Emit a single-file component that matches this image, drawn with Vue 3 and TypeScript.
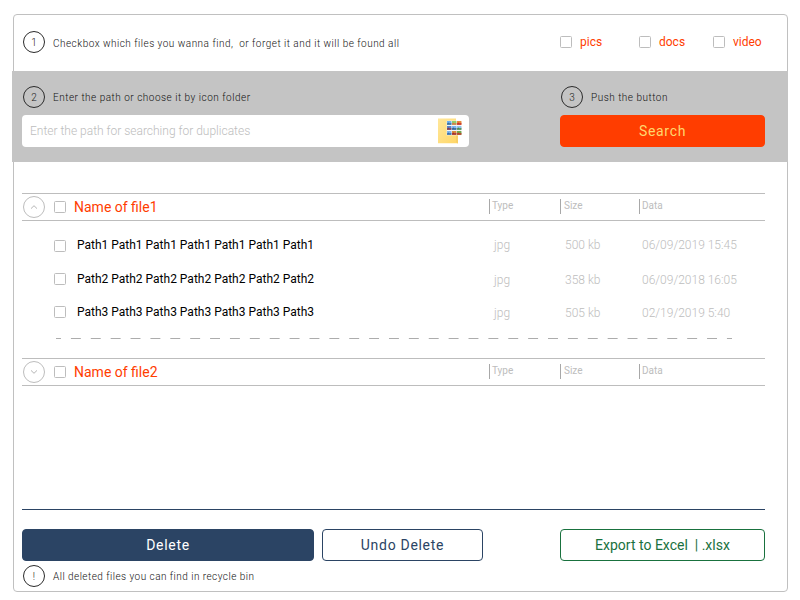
<script setup lang="ts">
import { ref } from 'vue'

interface Copy { path: string; type: string; size: string; date: string }
interface Group { name: string; open: boolean; copies: Copy[] }

const kinds = ref<string[]>(['pics', 'docs', 'video'])
const query = ref('')

const groups = ref<Group[]>([
  {
    name: 'Name of file1',
    open: true,
    copies: [
      { path: 'Path1 Path1 Path1 Path1 Path1 Path1 Path1', type: 'jpg', size: '500 kb', date: '06/09/2019 15:45' },
      { path: 'Path2 Path2 Path2 Path2 Path2 Path2 Path2', type: 'jpg', size: '358 kb', date: '06/09/2018 16:05' },
      { path: 'Path3 Path3 Path3 Path3 Path3 Path3 Path3', type: 'jpg', size: '505 kb', date: '02/19/2019 5:40' },
    ],
  },
  { name: 'Name of file2', open: false, copies: [] },
])

const thumbs = [
  { x: 9, y: 3, sky: '#6db0f2', land: '#3f6f9a' },
  { x: 14, y: 3, sky: '#8ccf70', land: '#d67a45' },
  { x: 19, y: 3, sky: '#e58a3c', land: '#c8302c' },
  { x: 9, y: 8, sky: '#5a83c8', land: '#8c3b4a' },
  { x: 14, y: 8, sky: '#7db4f0', land: '#31628f' },
  { x: 19, y: 8, sky: '#8fc0ec', land: '#4f8a45' },
  { x: 9, y: 13, sky: '#7fb5ee', land: '#3c6ea8' },
  { x: 14, y: 13, sky: '#d98a3a', land: '#a02c35' },
  { x: 19, y: 13, sky: '#70a84e', land: '#c23a2a' },
]
</script>

<template>
  <main class="frame">
    <section class="filters">
      <div class="hint"><span class="badge">1</span><span class="hint-text first">Checkbox which files you wanna find,&nbsp; or forget it and it will be found all</span></div>
      <label v-for="k in kinds" :key="k" class="kind"><input type="checkbox" class="box" />{{ k }}</label>
    </section>

    <section class="search">
      <div class="path-col">
        <div class="hint"><span class="badge">2</span><span class="hint-text">Enter the path or choose it by icon folder</span></div>
        <div class="field">
          <input v-model="query" class="query" type="text" placeholder="Enter the path for searching for duplicates" />
          <svg class="folder" width="26" height="26" viewBox="0 0 26 26">
            <defs>
              <linearGradient id="paper" x1="0" y1="0" x2="1" y2="1">
                <stop offset="0" stop-color="#ffe79b" />
                <stop offset="1" stop-color="#ffd665" />
              </linearGradient>
            </defs>
            <path d="M0 .5H18V16.5H20V25.3H0Z" fill="url(#paper)" />
            <path d="M18 16.5V23.5L19 25.3H20V16.5Z" fill="#f8ce65" />
            <rect x="8.7" y="2.7" width="14.6" height="14.6" fill="#f4f5f5" />
            <g v-for="(t, i) in thumbs" :key="i">
              <rect :x="t.x" :y="t.y" width="4.4" height="3.8" :fill="t.sky" />
              <path :d="`M${t.x} ${t.y + 2.6}l1.6-1 1.3 1 1.5-.8v2h-4.4z`" :fill="t.land" />
            </g>
          </svg>
        </div>
      </div>
      <div class="go-col">
        <div class="hint"><span class="badge">3</span><span class="hint-text">Push the button</span></div>
        <button class="btn go">Search</button>
      </div>
    </section>

    <section class="results">
      <article v-for="g in groups" :key="g.name" class="group">
        <header class="head">
          <button class="toggle" @click="g.open = !g.open">
            <svg width="8" height="4" viewBox="0 0 8 4"><path :d="g.open ? 'M1 3.6L4 .7L7 3.6' : 'M1 .4L4 3.3L7 .4'" /></svg>
          </button>
          <input type="checkbox" class="box" />
          <h2 class="name">{{ g.name }}</h2>
          <span class="col">Type</span>
          <span class="col size">Size</span>
          <span class="col">Data</span>
        </header>
        <div v-if="g.open" class="body">
          <div v-for="c in g.copies" :key="c.path" class="row">
            <input type="checkbox" class="box" />
            <span class="path">{{ c.path }}</span>
            <span class="meta">{{ c.type }}</span>
            <span class="meta">{{ c.size }}</span>
            <span class="meta">{{ c.date }}</span>
          </div>
          <svg class="dashes" width="676" height="1" viewBox="0 0 676 1"><line x1="0" y1=".5" x2="676" y2=".5" /></svg>
        </div>
      </article>
    </section>

    <footer class="footer">
      <div class="actions">
        <button class="btn delete">Delete</button>
        <button class="btn undo">Undo Delete</button>
        <button class="btn export">Export to Excel&nbsp; | .xlsx</button>
      </div>
      <div class="hint"><span class="badge">!</span><span class="hint-text note">All deleted files you can find in recycle bin</span></div>
    </footer>
  </main>
</template>

<style>
body {
  background: #fff;
}
</style>

<style scoped>
* {
  box-sizing: border-box;
}
.frame {
  display: flex;
  flex-direction: column;
  width: 775px;
  height: 578px;
  margin: 14px 0 0 13px;
  border: 1px solid #c0c0c0;
  border-radius: 4px;
  font-family: Roboto, sans-serif;
}
.hint {
  display: flex;
  align-items: center;
  gap: 8px;
  height: 22px;
  padding-left: 1px;
}
.badge {
  display: flex;
  flex: none;
  align-items: center;
  justify-content: center;
  width: 22px;
  height: 22px;
  border: 1px solid #2b2b2b;
  border-radius: 50%;
  font-size: 10px;
  font-weight: 300;
  color: #222;
}
.hint-text {
  padding-top: 2px;
  font-size: 10px;
  font-weight: 300;
  line-height: 12px;
  letter-spacing: 0.5px;
  color: #111;
  white-space: nowrap;
}
.first {
  padding-top: 4px;
  letter-spacing: 0.485px;
}
.box {
  appearance: none;
  flex: none;
  width: 12px;
  height: 12px;
  margin: 0;
  border: 1px solid #bdbdbd;
  border-radius: 1.5px;
  background: #fff;
}
.filters {
  display: grid;
  grid-template-columns: 538px 79px 74px 60px;
  height: 56px;
  padding: 16px 0 0 8px;
}
.kind {
  display: flex;
  align-items: center;
  gap: 8px;
  height: 22px;
  font-size: 12px;
  color: #ff3d00;
}
.search {
  display: flex;
  justify-content: space-between;
  height: 91px;
  margin: 0 -1px 0 -2px;
  padding: 15px 23px 0 10px;
  background: #c4c4c4;
}
.path-col {
  width: 447px;
}
.go-col {
  width: 205px;
}
.field {
  display: flex;
  align-items: center;
  height: 32px;
  margin-top: 7px;
  padding: 0 5px 0 8px;
  border-radius: 4px;
  background: #fff;
}
.query {
  flex: 1;
  min-width: 0;
  padding: 0;
  border: 0;
  outline: 0;
  background: none;
  font: 300 12px Roboto, sans-serif;
}
.query::placeholder {
  color: #bdbdbd;
  opacity: 1;
}
.btn {
  height: 32px;
  padding: 0;
  border: 1px solid;
  border-radius: 4px;
  background: #fff;
  font: 400 14px Roboto, sans-serif;
  letter-spacing: 0.7px;
}
.go {
  display: block;
  width: 100%;
  margin-top: 7px;
  border-color: #ff3d00;
  background: #ff3d00;
  color: #ffd76e;
}
.results {
  flex: 1;
  margin: 31px 22px 0 8px;
}
.head {
  display: grid;
  grid-template-columns: 32px 20px 415px 71px 79px 126px;
  align-items: center;
  height: 28px;
  border: solid #bdbdbd;
  border-width: 1px 0;
}
.toggle {
  display: flex;
  align-items: center;
  justify-content: center;
  width: 22px;
  height: 22px;
  margin-left: 1px;
  padding: 0;
  border: 1px solid #bdbdbd;
  border-radius: 50%;
  background: none;
}
.toggle path {
  fill: none;
  stroke: #b5b5b5;
  stroke-width: 1;
}
.name {
  margin: 0;
  font-size: 14px;
  font-weight: 400;
  color: #ff3d00;
}
.col {
  height: 15px;
  margin-top: -2px;
  padding-left: 2px;
  border-left: 1px solid #a8a8a8;
  font-size: 10px;
  line-height: 14px;
  color: #bdbdbd;
}
.size {
  padding-left: 3px;
}
.body {
  display: flex;
  flex-direction: column;
  height: 137px;
  padding: 15px 0 0 32px;
}
.row {
  display: grid;
  grid-template-columns: 23px 417px 71px 77px 130px;
  align-items: start;
  height: 33px;
  font-size: 12px;
  line-height: 20px;
}
.row .box {
  margin-top: 4px;
}
.path {
  color: #000;
}
.meta {
  padding-top: 1px;
  font-weight: 300;
  color: #bdbdbd;
}
.row:first-child .path,
.row:first-child .meta {
  margin-top: -1px;
  padding-top: 0;
}
.dashes {
  margin: 3px 0 0 2px;
}
.dashes line {
  stroke: #acacac;
  stroke-width: 1;
  stroke-dasharray: 9.94;
  stroke-dashoffset: 4.97;
}
.footer {
  height: 82px;
  margin: 0 22px 0 8px;
  padding-top: 19px;
  border-top: 1px solid #2b4464;
}
.actions {
  display: grid;
  grid-template-columns: 292px 161px 205px;
  column-gap: 8px;
  margin-bottom: 4px;
}
.delete {
  border-color: #2b4464;
  background: #2b4464;
  color: #fff;
}
.undo {
  border-color: #2b4464;
  color: #2b4464;
}
.export {
  width: 205px;
  margin-left: 69px;
  border-color: #19713e;
  color: #19713e;
  letter-spacing: 0;
}
.note {
  padding-top: 1px;
  letter-spacing: 0.46px;
}
</style>
